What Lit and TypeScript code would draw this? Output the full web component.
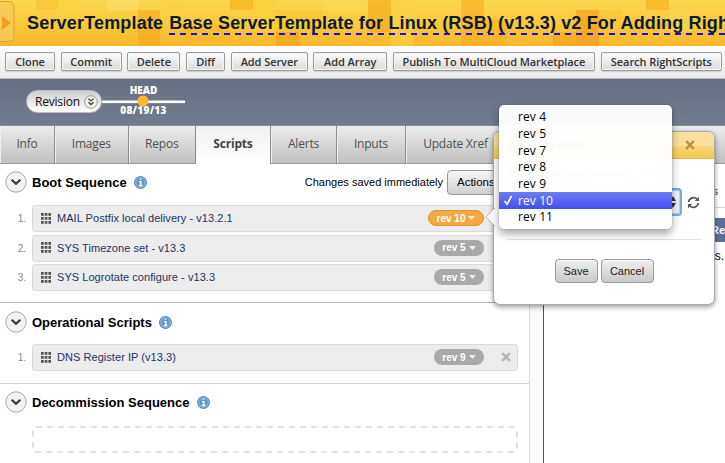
import { LitElement, html, css, svg } from "lit";
import { customElement } from "lit/decorators.js";
import { classMap } from "lit/directives/class-map.js";
import { styleMap } from "lit/directives/style-map.js";

interface Script {
  name: string;
  rev: string;
  active?: boolean;
}

const TILES: [number, number, number, number, string][] = [
  [36, 0, 22, 10, "#f9c02f"], [58, 0, 23, 10, "#fbd23f"], [107, 0, 31, 10, "#fde070"],
  [138, 10, 22, 36, "#f5a61e"], [161, 0, 23, 24, "#fad042"], [184, 24, 46, 22, "#f9b92a"],
  [230, 0, 23, 10, "#f7ae12"], [253, 0, 23, 32, "#fbce3d"], [276, 32, 23, 14, "#f5a01a"],
  [276, 10, 46, 22, "#f9c434"], [322, 0, 46, 10, "#fddb57"],
  [368, 0, 23, 32, "#f5a61c"], [391, 0, 23, 46, "#fbd047"], [461, 0, 23, 46, "#f7ac20"],
  [484, 20, 23, 26, "#f7b024"], [553, 32, 23, 14, "#f5a01a"], [576, 10, 23, 36, "#f3981a"],
  [646, 0, 23, 10, "#f7ae12"], [669, 10, 23, 22, "#fbd557"], [599, 10, 23, 22, "#fac33a"],
];

@customElement("app-root")
export class AppRoot extends LitElement {
  static styles = css`
    :host { display: block; width: 725px; height: 463px; overflow: hidden; position: relative; background: #fff;
      font: 12px "Liberation Sans", Arial, sans-serif; color: #000; }
    * { box-sizing: border-box; }
    svg { display: block; flex: none; }
    .banner { height: 46px; position: relative; overflow: hidden; background: linear-gradient(#fbd84e, #f9b92a); }
    .mosaic { position: absolute; inset: 0; }
    .title { position: relative; margin: 0; padding: 13px 0 0 27px; font-size: 18px; line-height: 20px; font-weight: bold;
      color: #0c1a38; white-space: nowrap; display: flex; gap: 6px; }
    .title .kind { letter-spacing: .18px; }
    .title .name { letter-spacing: .14px; height: 22px;
      background: repeating-linear-gradient(90deg, #1010f8 0 6px, transparent 6px 11px) 0 100% / 100% 2px no-repeat; }
    .toolbar { height: 33px; display: flex; padding: 6px 0 0 5px; gap: 5.7px; background: linear-gradient(#fff, #ebebeb); border-bottom: 1px solid #b6b8bb; }
    .tool { height: 19px; flex: none; border: 1px solid #9b9b9b; border-radius: 2px; background: linear-gradient(#fdfdfd, #dadada);
      box-shadow: inset 0 0 0 1px #f6f6f6, 0 1px 1px #ccc; font: 600 11px/17px "Open Sans", sans-serif; color: #333; text-align: center; white-space: nowrap; letter-spacing: -.07px; }
    .timeline { height: 46px; background: linear-gradient(#667082, #727c8e); display: flex; padding: 0 0 0 26px; }
    .revision { width: 76px; height: 23px; margin-top: 11px; border-radius: 12px; background: linear-gradient(#cfcfcf, #fff); border: 1px solid #b9bcc2;
      display: flex; align-items: center; gap: 4px; padding-left: 8px; font: 12px "Open Sans", sans-serif; color: #111; letter-spacing: -.2px; }
    .track { width: 83px; text-align: center; font: 800 10px/10px "Open Sans", sans-serif; color: #fff; }
    .track .head { padding-top: 6px; }
    .track .date { letter-spacing: .3px; margin-top: -2px; }
    .tabs { height: 39px; display: flex; border-top: 1px solid #8b9098; background: linear-gradient(#ececec, #c0c0c0); border-bottom: 1px solid #999; }
    .tab { flex: none; border-right: 1px solid #8f8f8f; box-shadow: inset 1px 0 #eee; text-align: center; font: 12px/36px "Open Sans", sans-serif; color: #505050; letter-spacing: -.2px; }
    .tab.on { height: 38px; background: linear-gradient(#f1f1f1, #fff); font-weight: 700; color: #444; }
    .content { display: flex; height: 299px; }
    .scripts { width: 530px; flex: none; border-right: 1px solid #dcdcdc; }
    .gutter { width: 14px; flex: none; background: #fafafa; border-right: 1px solid #555; }
    .section { border-bottom: 1px solid #b5b5b5; padding-right: 11px; }
    .boot { height: 139px; padding-top: 7px; }
    .oper { height: 81px; padding-top: 8px; border-color: #d0d0d0; }
    .decom { border: 0; padding-top: 7px; }
    .heading { height: 22px; display: flex; align-items: center; padding-left: 5px; white-space: nowrap; }
    .heading h2 { font-size: 13px; margin: 0 7px 0 5px; }
    .saved { margin-left: auto; font-size: 11px; padding-right: 4px; }
    .actions { width: 69px; height: 25px; margin-right: 2px; border: 1px solid #999; border-radius: 4px; background: linear-gradient(#f7f7f7, #cfcfcf); font-size: 11.5px; line-height: 23px; padding-left: 9px; }
    .rows { display: flex; flex-direction: column; gap: 2.5px; padding-top: 12px; }
    .oper .rows { padding-top: 11px; }
    .line { display: flex; align-items: center; height: 27px; }
    .num { width: 32px; text-align: right; padding-right: 6px; font-size: 10px; color: #8a8a8a; flex: none; }
    .card { flex: 1; height: 27px; display: flex; align-items: center; padding: 0 6px 1px 8px; background: #ececec; border: 1px solid #dadada; border-radius: 3px; }
    .card .name { white-space: nowrap; color: #1d3365; font-size: 11px; letter-spacing: .05px; margin-left: 6px; }
    .rev { margin-left: auto; height: 16px; width: 50px; border-radius: 8px; background: #a9a9a9; color: #fff; font-weight: bold; font-size: 10px; display: flex; align-items: center; justify-content: center; gap: 3px; margin-right: 17px; }
    .rev.active { width: 56px; background: #f4a946; border: 1px solid #dc9434; }
    .dropzone { margin: 13px 0 0 32px; }
    .aside { flex: 1; min-width: 0; padding-left: 10px; }
    .link { height: 44px; border-bottom: 1px solid #d5d5d5; text-align: right; padding: 21px 7px 0 0; font-size: 11px; color: #24457c; }
    .thead { margin-top: 10px; height: 24px; background: #5b6f98; color: #fff; font-weight: bold; font-size: 11px; line-height: 24px; padding-left: 157px; white-space: nowrap; overflow: hidden; }
    .cell { text-align: right; padding: 7px 1px 0 0; font-size: 12px; }
    .dialog { position: absolute; left: 493px; top: 131px; width: 222px; height: 174px; border: 1px solid #aaa; border-radius: 7px; background: #fff; box-shadow: 0 2px 5px rgba(0,0,0,.4); }
    .bar { height: 27px; border-radius: 6px 6px 0 0; background: linear-gradient(#f9e0a0 0 52%, #f8d882 52%, #f4c94e); border-bottom: 1px solid #e6b93f; display: flex; align-items: center; padding: 0 19px 0 14px; justify-content: space-between; font-weight: bold; font-size: 11px; color: #555; }
    .pointer { position: absolute; left: -9px; top: 76px; }
    .body { padding: 9px 14px 0; height: 80px; }
    .what { font-size: 9.5px; line-height: 13px; font-weight: bold; color: #666; white-space: nowrap; }
    .pick { display: flex; justify-content: space-between; align-items: center; margin-top: 7px; }
    .select { width: 174px; height: 28px; border: 2px solid #78aadd; border-radius: 4px; background: #eef3f8; box-shadow: inset 0 0 0 1px #b6d3f0; display: flex; justify-content: flex-end; align-items: center; padding-right: 4px; }
    .rule { border-top: 1px solid #e2e2e2; margin: 0 13px; }
    .foot { display: flex; justify-content: center; gap: 3px; padding: 19px 0 0; }
    .btn { height: 24px; border: 1px solid #999; border-radius: 4px; background: linear-gradient(#f0f0f0, #c9c9c9); box-shadow: inset 0 1px #fff; text-align: center; line-height: 22px; font-size: 11px; color: #222; }
    .save { width: 43px; }
    .cancel { width: 53px; }
    .menu { position: absolute; left: 499px; top: 105px; width: 173px; height: 124px; padding-top: 3.6px; border-radius: 5px; background: rgba(255,255,255,.965); box-shadow: 0 5px 9px rgba(0,0,0,.35), 0 0 1px rgba(0,0,0,.5); overflow: hidden; }
    .opt { height: 16.67px; display: flex; align-items: center; font: 12px "Open Sans", sans-serif; letter-spacing: .1px; }
    .opt .tick { width: 19px; padding-left: 4px; }
    .opt.on { color: #fff; background: linear-gradient(#6c7cf5, #4150ef); }
  `;

  private tools: [string, number][] = [["Clone", 50], ["Commit", 61], ["Delete", 53], ["Diff", 39], ["Add Server", 77], ["Add Array", 73.5], ["Publish To MultiCloud Marketplace", 202.5], ["Search RightScripts", 121]];
  private tabs: [string, number][] = [["Info", 55], ["Images", 73.5], ["Repos", 67.5], ["Scripts", 75], ["Alerts", 66], ["Inputs", 69], ["Update Xref", 100]];
  private boot: Script[] = [
    { name: "MAIL Postfix local delivery - v13.2.1", rev: "rev 10", active: true },
    { name: "SYS Timezone set - v13.3", rev: "rev 5" },
    { name: "SYS Logrotate configure - v13.3", rev: "rev 5" },
  ];
  private oper: Script[] = [{ name: "DNS Register IP (v13.3)", rev: "rev 9" }];

  private cross(color: string) {
    return html`<svg width="10" height="10" viewBox="0 0 10 10"><path d="M1.2 1.2L8.8 8.8M8.8 1.2L1.2 8.8" stroke=${color} stroke-width="2.4" /></svg>`;
  }

  private heading(title: string, extra: unknown = "") {
    return html`<div class="heading">
      <svg width="22" height="22" viewBox="0 0 22 22"><circle cx="11" cy="11" r="10.2" fill="#f3f3f3" stroke="#a8a8a8" /><path d="M6.6 8.8L11 12.8L15.4 8.8" fill="none" stroke="#383838" stroke-width="2.2" /></svg>
      <h2>${title}</h2>
      <svg width="13" height="13" viewBox="0 0 13 13"><circle cx="6.5" cy="6.5" r="6" fill="#6598cf" stroke="#5687bb" /><circle cx="6.5" cy="6.5" r="4.8" fill="none" stroke="#9dc0e4" stroke-width=".8" /><path d="M5 5.6h1.8v3.6M4.8 9.5h3.6M5.8 3.4h1.4" stroke="#fff" stroke-width="1.4" fill="none" /></svg>
      ${extra}
    </div>`;
  }

  private row(s: Script, i: number) {
    return html`<div class="line"><span class="num">${i + 1}.</span>
      <div class="card">
        <svg width="10" height="11" viewBox="0 0 10 11">${[0, 3.7, 7.4].map((x) => [0, 4, 8].map((y) => svg`<rect x=${x} y=${y} width="2.7" height="2.8" fill="#555" />`))}</svg>
        <span class="name">${s.name}</span>
        <span class=${classMap({ rev: true, active: !!s.active })}>${s.rev}<svg width="7" height="4" viewBox="0 0 7 4"><path d="M0 0H7L3.5 4Z" fill="#fff" opacity=".85" /></svg></span>
        ${this.cross("#b5b5b5")}
      </div></div>`;
  }

  render() {
    return html`
      <header class="banner">
        <svg class="mosaic" width="725" height="46">
          ${TILES.map(([x, y, w, h, c]) => svg`<rect x=${x} y=${y} width=${w} height=${h} fill=${c} opacity=".6" />`)}
          <rect x="-8" y="1.5" width="22" height="40" rx="5" fill="#f8ca55" stroke="#d9a136" />
          <path d="M2 16L11 23L2 30Z" fill="#f39b22" />
        </svg>
        <h1 class="title"><span class="kind">ServerTemplate</span><span class="name">Base ServerTemplate for Linux (RSB) (v13.3) v2 For Adding RightScripts</span></h1>
      </header>
      <div class="toolbar">${this.tools.map(([t, w]) => html`<div class="tool" style=${styleMap({ width: w + "px" })}>${t}</div>`)}</div>
      <div class="timeline">
        <div class="revision">Revision <svg width="14" height="14" viewBox="0 0 14 14"><circle cx="7" cy="7" r="6.3" fill="#f1f3e4" stroke="#999" /><path d="M4.4 3.7L7 6L9.6 3.7M4.4 7.3L7 9.6L9.6 7.3" fill="none" stroke="#444" stroke-width="1.3" /></svg></div>
        <div class="track"><div class="head">HEAD</div>
          <svg width="83" height="12" viewBox="0 0 83 12"><rect y="5.5" width="83" height="2.6" fill="#fff" /><circle cx="41" cy="6" r="5.5" fill="#fdb92c" /></svg>
          <div class="date">08/19/13</div></div>
      </div>
      <nav class="tabs">${this.tabs.map(([t, w]) => html`<div class=${classMap({ tab: true, on: t === "Scripts" })} style=${styleMap({ width: w + "px" })}>${t}</div>`)}</nav>
      <main class="content">
        <div class="scripts">
          <section class="section boot">${this.heading("Boot Sequence", html`<span class="saved">Changes saved immediately</span><span class="actions">Actions</span>`)}
            <div class="rows">${this.boot.map((s, i) => this.row(s, i))}</div></section>
          <section class="section oper">${this.heading("Operational Scripts")}<div class="rows">${this.oper.map((s, i) => this.row(s, i))}</div></section>
          <section class="section decom">${this.heading("Decommission Sequence")}
            <svg class="dropzone" width="486" height="27"><rect x="1" y="1" width="484" height="25" rx="3" fill="none" stroke="#d9d9d9" stroke-width="1.6" stroke-dasharray="6 5" /></svg></section>
        </div>
        <div class="gutter"></div>
        <aside class="aside"><div class="link">Scripts</div><div class="thead">Repo</div><div class="cell">tasks.</div></aside>
      </main>
      <div class="dialog">
        <div class="bar"><span>Select Revision</span>${this.cross("#b0943f")}</div>
        <svg class="pointer" width="10" height="18" viewBox="0 0 10 18"><path d="M10 0L1 9L10 18" fill="#fff" stroke="#bbb" /></svg>
        <div class="body"><div class="what">MAIL Postfix local delivery - v13.2.1</div>
          <div class="pick"><span class="select"><svg width="6" height="12" viewBox="0 0 6 12"><path d="M0 5L3 0L6 5ZM0 7L3 12L6 7Z" fill="#333" /></svg></span>
            <svg width="13" height="13" viewBox="0 0 13 13"><path d="M1.7 6A4.9 4.9 0 0 1 10.2 3.3M11.3 7A4.9 4.9 0 0 1 2.8 9.7" fill="none" stroke="#555" stroke-width="1.7" /><path d="M12 .7V5H7.7ZM1 12.3V8H5.3Z" fill="#555" /></svg></div></div>
        <div class="rule"></div>
        <div class="foot"><span class="btn save">Save</span><span class="btn cancel">Cancel</span></div>
      </div>
      <div class="menu">${[4, 5, 7, 8, 9, 10, 11].map((n) => html`<div class=${classMap({ opt: true, on: n === 10 })}><span class="tick">${n === 10 ? html`<svg width="11" height="11" viewBox="0 0 11 11"><path d="M1.5 6L4 9.3L8.5 1" fill="none" stroke="#fff" stroke-width="1.7" /></svg>` : ""}</span>rev ${n}</div>`)}</div>
    `;
  }
}
